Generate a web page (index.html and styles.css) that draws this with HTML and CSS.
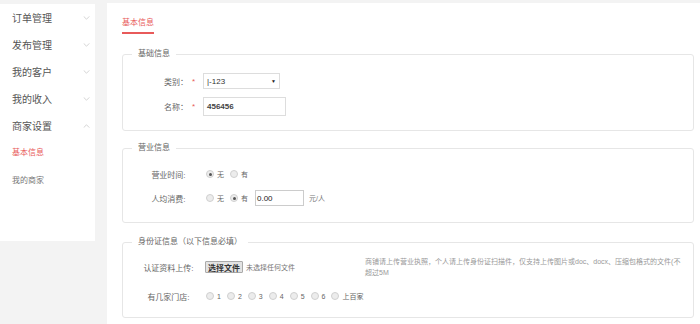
FILE: index.html
```html
<!DOCTYPE html>
<html lang="zh-CN">
<head>
<meta charset="utf-8">
<link rel="stylesheet" href="styles.css">
</head>
<body>
<div class="page">
  <aside class="sidebar">
    <div class="menu-item"><span>订单管理</span><svg class="chev" viewBox="0 0 8 5" width="7" height="4"><path d="M0.5 0.5 L4 4 L7.5 0.5" fill="none" stroke="#bbb" stroke-width="0.8"/></svg></div>
    <div class="menu-item"><span>发布管理</span><svg class="chev" viewBox="0 0 8 5" width="7" height="4"><path d="M0.5 0.5 L4 4 L7.5 0.5" fill="none" stroke="#bbb" stroke-width="0.8"/></svg></div>
    <div class="menu-item"><span>我的客户</span><svg class="chev" viewBox="0 0 8 5" width="7" height="4"><path d="M0.5 0.5 L4 4 L7.5 0.5" fill="none" stroke="#bbb" stroke-width="0.8"/></svg></div>
    <div class="menu-item"><span>我的收入</span><svg class="chev" viewBox="0 0 8 5" width="7" height="4"><path d="M0.5 0.5 L4 4 L7.5 0.5" fill="none" stroke="#bbb" stroke-width="0.8"/></svg></div>
    <div class="menu-item"><span>商家设置</span><svg class="chev" viewBox="0 0 8 5" width="7" height="4"><path d="M0.5 4.5 L4 1 L7.5 4.5" fill="none" stroke="#bbb" stroke-width="0.8"/></svg></div>
    <div class="sub-item active">基本信息</div>
    <div class="sub-item">我的商家</div>
  </aside>
  <main class="main">
    <div class="tabs"><span class="tab">基本信息</span></div>

    <fieldset class="box">
      <legend>基础信息</legend>
      <div class="row r1">
        <span class="label-r">类别：</span><span class="star">*</span>
        <div class="select"><span>|-123</span><span class="arrow">▼</span></div>
      </div>
      <div class="row r1">
        <span class="label-r">名称：</span><span class="star">*</span>
        <div class="input wide">456456</div>
      </div>
    </fieldset>

    <fieldset class="box box2">
      <legend>营业信息</legend>
      <div class="row">
        <span class="label-c">营业时间:</span>
        <span class="radio checked"></span><span class="rtext">无</span>
        <span class="radio"></span><span class="rtext">有</span>
      </div>
      <div class="row">
        <span class="label-c">人均消费:</span>
        <span class="radio"></span><span class="rtext">无</span>
        <span class="radio checked"></span><span class="rtext">有</span>
        <div class="input small">0.00</div>
        <span class="unit">元/人</span>
      </div>
    </fieldset>

    <fieldset class="box box3">
      <legend>身份证信息（以下信息必填）</legend>
      <div class="row upload">
        <span class="label-c">认证资料上传:</span>
        <span class="filebtn">选择文件</span>
        <span class="nofile">未选择任何文件</span>
        <p class="help">商铺请上传营业执照，个人请上传身份证扫描件，仅支持上传图片或doc、docx、压缩包格式的文件(不超过5M</p>
      </div>
      <div class="row">
        <span class="label-c">有几家门店:</span>
        <span class="radio"></span><span class="ntext">1</span>
        <span class="radio"></span><span class="ntext">2</span>
        <span class="radio"></span><span class="ntext">3</span>
        <span class="radio"></span><span class="ntext">4</span>
        <span class="radio"></span><span class="ntext">5</span>
        <span class="radio"></span><span class="ntext">6</span>
        <span class="radio"></span><span class="ntext">上百家</span>
      </div>
    </fieldset>
  </main>
</div>
</body>
</html>
```

FILE: styles.css
```css
html, body {
  margin: 0;
  padding: 0;
  background: #f3f3f3;
  font-family: "Liberation Sans", "Noto Sans CJK SC", sans-serif;
  color: #666;
}
.page {
  display: flex;
  align-items: flex-start;
  gap: 12px;
  padding-top: 4px;
  height: 320px;
  overflow: hidden;
}
.sidebar {
  width: 95px;
  height: 237px;
  background: #fff;
  flex: none;
}
.menu-item {
  height: 27px;
  display: flex;
  align-items: center;
  justify-content: space-between;
  padding: 0 5px 0 12px;
  font-size: 10px;
  color: #555;
}
.chev { display: block; }
.sub-item {
  height: 28px;
  line-height: 28px;
  padding-left: 12px;
  font-size: 8px;
  color: #777;
}
.sub-item.active { color: #e85a5a; }

.main {
  flex: 1;
  background: #fff;
  margin-top: -1px;
  padding: 14px 6px 10px 15px;
  min-height: 320px;
}
.tabs { display: flex; }
.tab {
  font-size: 8px;
  line-height: 12px;
  color: #e85a5a;
  padding-bottom: 3px;
  border-bottom: 2px solid #e85a5a;
}
.box {
  margin: 14px 0 0 0;
  padding: 11px 0 14px 0;
  border: 1px solid #e6e6e6;
  border-radius: 3px;
}
.box legend {
  font-size: 8px;
  line-height: 12px;
  color: #666;
  margin-left: 9px;
  padding: 0 6px;
}
.box2 { margin-top: 11px; padding-top: 10px; }
.box3 { margin-top: 13px; padding-top: 7px; padding-bottom: 11px; }

.row {
  display: flex;
  align-items: center;
  height: 20px;
  font-size: 8px;
}
.r1 + .r1 { margin-top: 5px; }
.box2 .row + .row { margin-top: 4px; }
.box3 .row + .row { margin-top: 7px; }
.row.upload { height: 24px; }

.label-r {
  width: 65px;
  text-align: right;
  color: #666;
}
.star {
  color: #e85a5a;
  margin-left: 4px;
  width: 4px;
}
.select {
  margin-left: 7px;
  width: 77px;
  height: 16px;
  box-sizing: border-box;
  border: 1px solid #ddd;
  display: flex;
  align-items: center;
  justify-content: space-between;
  padding: 0 3px;
  color: #333;
}
.arrow { font-size: 5px; color: #222; }
.input {
  box-sizing: border-box;
  border: 1px solid #ddd;
  display: flex;
  align-items: center;
  padding-left: 3px;
  color: #333;
}
.input.wide { margin-left: 7px; width: 83px; height: 19px; font-weight: bold; color: #444; }
.input.small { margin-left: 2px; width: 49px; height: 16px; border-color: #ccc; color: #222; padding-left: 1px; }
.unit { margin-left: 5px; color: #777; font-size: 7px; }

.label-c {
  margin-left: 9px;
  width: 73px;
  text-align: center;
  color: #666;
}
.radio {
  width: 8px;
  height: 8px;
  box-sizing: border-box;
  border: 1px solid #d0d0d0;
  border-radius: 50%;
  background: #ececec;
  margin-left: 1px;
  display: flex;
  align-items: center;
  justify-content: center;
  flex: none;
}
.radio.checked::after {
  content: "";
  width: 3px;
  height: 3px;
  border-radius: 50%;
  background: #555;
}
.rtext { margin-left: 3px; margin-right: 5px; color: #666; font-size: 7px; }
.ntext { margin-left: 3px; margin-right: 5px; color: #666; font-size: 7px; }

.filebtn {
  box-sizing: border-box;
  height: 12px;
  width: 38px;
  border: 1px solid #aaa;
  background: #e3e3e3;
  border-radius: 1px;
  display: flex;
  align-items: center;
  justify-content: center;
  font-weight: bold;
  color: #333;
  font-size: 8px;
}
.nofile { margin-left: 3px; font-size: 7px; color: #777; }
.help {
  margin: 0 0 0 70px;
  width: 322px;
  font-size: 7px;
  line-height: 11px;
  color: #999;
}
```
